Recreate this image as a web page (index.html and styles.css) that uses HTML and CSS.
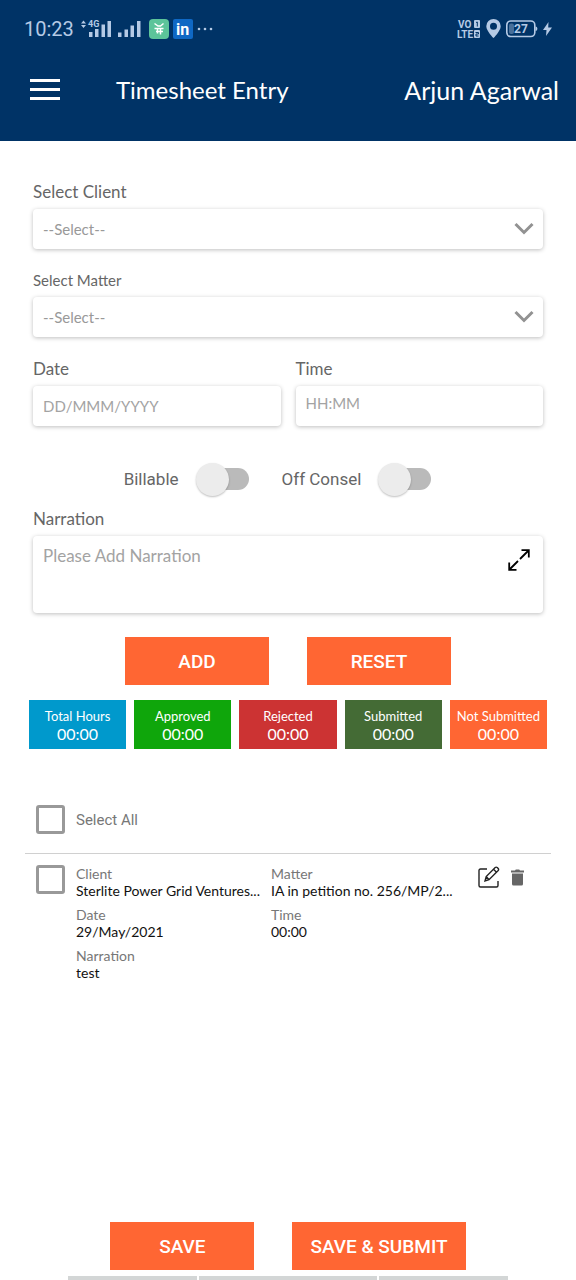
FILE: index.html
```html
<!DOCTYPE html>
<html lang="en">
<head>
<meta charset="utf-8">
<meta name="viewport" content="width=device-width, initial-scale=1">
<title>Timesheet Entry</title>
<link rel="stylesheet" href="styles.css">
</head>
<body>
<header class="header">
  <div class="status">
    <div class="status-group">
      <span class="clock">10:23</span>
      <svg class="signal" width="62" height="20" viewBox="0 0 62 20" fill="currentColor" aria-hidden="true">
        <path d="M0 4.5 2.5 1.5 5 4.5zM0 6 2.5 9 5 6z"/>
        <text x="7" y="8" font-size="9" font-weight="700">4G</text>
        <path d="M8 13h3.500v5H8zM14 10h3.500v8H14zM20.500 5.500H24V18h-3.500zM26.500 2H30v16h-3.500zM37 13.500h3.500V18H37zM43.500 10.500H47V18h-3.500zM49.500 6.500H53V18h-3.500zM56 2h3.500v16H56z"/>
      </svg>
      <svg class="app-icon" width="20" height="20" viewBox="0 0 20 20" aria-hidden="true">
        <rect width="20" height="20" rx="4" fill="#5cc49a"/>
        <path d="M5.500 4.500 9 7h2.500l3-2.500M5.500 9.500h9M7 12.500h7M8.500 9v5.500M11.500 9v6.500" fill="none" stroke="#fff" stroke-width="1.500"/>
      </svg>
      <svg class="app-icon" width="20" height="20" viewBox="0 0 20 20" aria-hidden="true">
        <rect width="20" height="20" rx="2" fill="#0f68c4"/>
        <text x="3" y="16" font-size="16" font-weight="700" fill="#fff">in</text>
      </svg>
      <svg width="16" height="4" viewBox="0 0 16 4" fill="currentColor" aria-hidden="true"><circle cx="2" cy="2" r="1.300"/><circle cx="8" cy="2" r="1.300"/><circle cx="14" cy="2" r="1.300"/></svg>
    </div>
    <div class="status-group status-right">
      <svg width="24" height="20" viewBox="0 0 24 20" fill="currentColor" aria-hidden="true">
        <text x="1" y="9" font-size="10" font-weight="700">VO</text>
        <text x="0" y="19" font-size="10" font-weight="700">LTE</text>
        <rect x="17" y="1" width="6" height="8" rx="1"/><rect x="17" y="11" width="6" height="8" rx="1"/>
        <path d="M19 3.500 20.300 3v4.500M18.500 13.500h3v1.500H19v2h2.500" fill="none" stroke="#003366"/>
      </svg>
      <svg width="15" height="20" viewBox="0 0 15 20" fill="currentColor" aria-hidden="true">
        <path fill-rule="evenodd" d="M7.500 0A7.200 7.200 0 0 0 .3 7.200C.3 12 7.500 19 7.500 19s7.200-7 7.200-11.800A7.200 7.200 0 0 0 7.500 0zm0 3.700a3.500 3.500 0 1 1 0 7 3.500 3.500 0 0 1 0-7z"/>
      </svg>
      <svg width="32" height="18" viewBox="0 0 32 18" fill="currentColor" aria-hidden="true">
        <rect x=".8" y="1" width="28" height="15.500" rx="4" fill="none" stroke="currentColor" stroke-width="1.600"/>
        <path d="M29.500 6.500c2.500 0 2.500 4.500 0 4.500z"/>
        <rect x="3" y="3.500" width="5" height="10.500" rx="2" opacity=".4"/>
        <text x="8" y="13" font-size="12" font-weight="700">27</text>
      </svg>
      <svg width="9" height="14" viewBox="0 0 9 14" fill="currentColor" aria-hidden="true"><path d="M5.500 0 0 8h3.500L3 14l6-8.500H5.200z"/></svg>
    </div>
  </div>
  <div class="appbar">
    <button class="menu" type="button" aria-label="Menu">
      <svg width="30" height="22" viewBox="0 0 30 22" fill="#fff"><path d="M0 0h30v3H0zM0 9h30v3H0zM0 18h30v3H0z"/></svg>
    </button>
    <h1 class="title">Timesheet Entry</h1>
    <span class="user">Arjun Agarwal</span>
  </div>
</header>

<main class="main">
  <form class="form">
    <div class="field">
      <label class="label" for="client">Select Client</label>
      <div class="select-wrap">
        <select class="box select" id="client"><option>--Select--</option></select>
        <svg class="chevron" width="20" height="14" viewBox="0 0 20 14" aria-hidden="true"><path d="m1.500 2 8.500 8.500L18.500 2" fill="none" stroke="#929292" stroke-width="3"/></svg>
      </div>
    </div>
    <div class="field">
      <label class="label label-small" for="matter">Select Matter</label>
      <div class="select-wrap">
        <select class="box select" id="matter"><option>--Select--</option></select>
        <svg class="chevron" width="20" height="14" viewBox="0 0 20 14" aria-hidden="true"><path d="m1.500 2 8.500 8.500L18.500 2" fill="none" stroke="#929292" stroke-width="3"/></svg>
      </div>
    </div>
    <div class="pair">
      <div class="field">
        <label class="label" for="date">Date</label>
        <input class="box" id="date" type="text" placeholder="DD/MMM/YYYY">
      </div>
      <div class="field">
        <label class="label" for="time">Time</label>
        <input class="box box-raised" id="time" type="text" placeholder="HH:MM">
      </div>
    </div>
    <div class="toggles">
      <label class="toggle">Billable <input class="switch" type="checkbox" role="switch"></label>
      <label class="toggle">Off Consel <input class="switch" type="checkbox" role="switch"></label>
    </div>
    <div class="field">
      <label class="label" for="narration">Narration</label>
      <div class="narration-wrap">
        <textarea class="box narration" id="narration" placeholder="Please Add Narration"></textarea>
        <button class="expand" type="button" aria-label="Expand narration">
          <svg width="22" height="22" viewBox="0 0 22 22" fill="none" stroke="#000" stroke-width="1.800"><path d="M12 10 20.500 1.500M13.500 1.200h7.300v7.300M10 12 1.500 20.500M1.200 13.500v7.300h7.300"/></svg>
        </button>
      </div>
    </div>
    <div class="actions">
      <button class="btn" type="button">ADD</button>
      <button class="btn" type="reset">RESET</button>
    </div>
  </form>

  <section class="tiles" aria-label="Totals">
    <div class="tile tile-total"><span>Total Hours</span><span class="hours">00:00</span></div>
    <div class="tile tile-approved"><span>Approved</span><span class="hours">00:00</span></div>
    <div class="tile tile-rejected"><span>Rejected</span><span class="hours">00:00</span></div>
    <div class="tile tile-submitted"><span>Submitted</span><span class="hours">00:00</span></div>
    <div class="tile tile-pending"><span>Not Submitted</span><span class="hours">00:00</span></div>
  </section>

  <section class="list">
    <label class="select-all"><input class="check" type="checkbox"> Select All</label>
    <article class="entry">
      <input class="check" type="checkbox" aria-label="Select entry">
      <dl class="details">
        <div class="detail"><dt>Client</dt><dd>Sterlite Power Grid Ventures...</dd></div>
        <div class="detail"><dt>Matter</dt><dd>IA in petition no. 256/MP/2...</dd></div>
        <div class="detail"><dt>Date</dt><dd>29/May/2021</dd></div>
        <div class="detail"><dt>Time</dt><dd>00:00</dd></div>
        <div class="detail"><dt>Narration</dt><dd>test</dd></div>
      </dl>
      <div class="tools">
        <button class="tool" type="button" aria-label="Edit">
          <svg width="22" height="22" viewBox="0 0 22 22" fill="none" stroke="#222" stroke-width="1.400"><path d="M9 3H2.500Q1 3 1 4.500v15Q1 21 2.500 21h16q1.500 0 1.500-1.500V15M7 15l1.200-4.500L17.200 1.500q1-.8 2 0l1 1q.8 1 0 2L11 13.700zM8.200 10.500l2.800 3.200M15.500 3.200l3 3"/></svg>
        </button>
        <button class="tool" type="button" aria-label="Delete">
          <svg width="13" height="17" viewBox="0 0 13 17" fill="#666"><path d="M0 1.500h4l.8-1h3.400l.8 1h4v2H0zM1 4.500h11V15q0 1.500-1.500 1.500h-8Q1 16.500 1 15z"/></svg>
        </button>
      </div>
    </article>
  </section>
</main>

<footer class="footer">
  <div class="actions">
    <button class="btn" type="button">SAVE</button>
    <button class="btn" type="button">SAVE &amp; SUBMIT</button>
  </div>
  <div class="strip" aria-hidden="true"><i></i><i></i><i></i></div>
</footer>
</body>
</html>
```
FILE: styles.css
```css
* { box-sizing: border-box; }

body {
  margin: 0;
  min-height: 100vh;
  display: flex;
  flex-direction: column;
  background: #fff;
  color: #666;
  font: 16px/20px Lato, "Noto Sans", sans-serif;
}

button, input, select, textarea { font: inherit; margin: 0; }
button { padding: 0; border: 0; background: none; cursor: pointer; }
svg { display: block; flex: none; }

.header { background: #036; color: #fff; padding: 16px 17px 32px 24px; }

.status {
  display: flex;
  justify-content: space-between;
  align-items: center;
  height: 26px;
  color: #b5cae5;
  font-family: Roboto, sans-serif;
}
.status-group { display: flex; align-items: center; }
.status-right { gap: 5px; padding-right: 7px; }
.clock { font-size: 20px; margin-right: 7px; }
.signal { margin-right: 6px; }
.app-icon { margin-right: 4px; }

.appbar { display: flex; align-items: center; height: 67px; padding-top: 29px; }
.menu { margin: 0 56px 0 6px; }
.title, .user { margin: 0; font-size: 25px; line-height: 30px; font-weight: 400; }
.title { font-size: 24px; }
.user { margin-left: auto; }

.main { flex: 1; padding-top: 41px; }

.form { display: flex; flex-direction: column; gap: 21px; padding: 0 33px; }
.field { display: flex; flex-direction: column; gap: 7px; flex: 1; min-width: 0; }
.label { font-size: 17px; }
.label-small { font-size: 15px; }

.box {
  width: 100%;
  height: 40px;
  padding: 0 10px;
  border: 0;
  border-radius: 4px;
  background: #fff;
  box-shadow: 0 1px 4px rgba(0, 0, 0, .26);
  color: #999;
  font-size: 15px;
}
.box::placeholder { color: #a3a3a3; opacity: 1; }
.box-raised { padding-bottom: 6px; }

.select-wrap, .narration-wrap { position: relative; display: flex; }
.select { appearance: none; }
.chevron { position: absolute; right: 9px; top: 13px; pointer-events: none; }

.pair { display: flex; gap: 15px; padding-top: 1px; }

.toggles { display: flex; justify-content: center; gap: 33px; padding: 15px 21px 0 0; margin-bottom: -8px; }
.toggle { display: flex; align-items: center; gap: 24px; height: 34px; font: 17px/20px Roboto, sans-serif; }
.switch {
  appearance: none;
  position: relative;
  width: 46px;
  height: 22px;
  border-radius: 11px;
  background: #bababa;
}
.switch::before {
  content: "";
  position: absolute;
  left: -7px;
  top: -5px;
  width: 33px;
  height: 33px;
  border-radius: 50%;
  background: #ececec;
  box-shadow: 0 1px 2px rgba(0, 0, 0, .25);
}
.switch:checked::before { left: 20px; }

.narration { height: 77px; padding: 10px; resize: none; font-size: 17px; }
.expand { position: absolute; top: 13px; right: 13px; }

.actions { display: flex; justify-content: center; gap: 38px; }
.form .actions { margin-top: 3px; }
.btn {
  min-width: 144px;
  height: 48px;
  padding: 2px 18px 0;
  background: #ff6633;
  color: #fff;
  font: 500 19px/24px Roboto, sans-serif;
}

.tiles { display: grid; grid-template-columns: repeat(5, minmax(0, 1fr)); gap: 8px; padding: 15px 29px 0; }
.tile {
  display: flex;
  flex-direction: column;
  align-items: center;
  padding: 8px 0 7px;
  color: #fff;
  font-size: 13px;
  line-height: 17px;
  white-space: nowrap;
}
.hours { font-size: 16px; }
.tile-total { background: #0099cc; }
.tile-approved { background: #0fa60b; }
.tile-rejected { background: #cc3333; }
.tile-submitted { background: #446b35; }
.tile-pending { background: #ff6633; }

.list { padding: 56px 25px 0; }
.check {
  appearance: none;
  flex: none;
  width: 29px;
  height: 29px;
  border: 3px solid #999;
  border-radius: 3px;
}
.check:checked { background: #ff6633; }
.select-all {
  display: flex;
  align-items: center;
  gap: 11px;
  padding: 0 11px 19px;
  border-bottom: 1px solid #d0d0d0;
  font: 15px/20px Roboto, sans-serif;
  color: #777;
}
.entry { display: flex; align-items: flex-start; gap: 11px; padding: 11px 27px 0 11px; }
.details {
  flex: 1;
  display: grid;
  grid-template-columns: 187px minmax(0, 1fr);
  gap: 7px 8px;
  margin: 0;
  font-size: 14px;
  line-height: 17px;
}
.detail { min-width: 0; }
.detail dt { color: #777; }
.detail dd { margin: 0; color: #111; white-space: nowrap; }
.tools { display: flex; align-items: center; gap: 11px; padding-top: 1px; }

.footer { display: flex; flex-direction: column; gap: 6px; }
.strip { display: flex; gap: 2px; height: 4px; padding: 0 68px; }
.strip i { flex: 13; background: #d3d6d6; }
.strip i:nth-child(2) { flex: 18; }
```
